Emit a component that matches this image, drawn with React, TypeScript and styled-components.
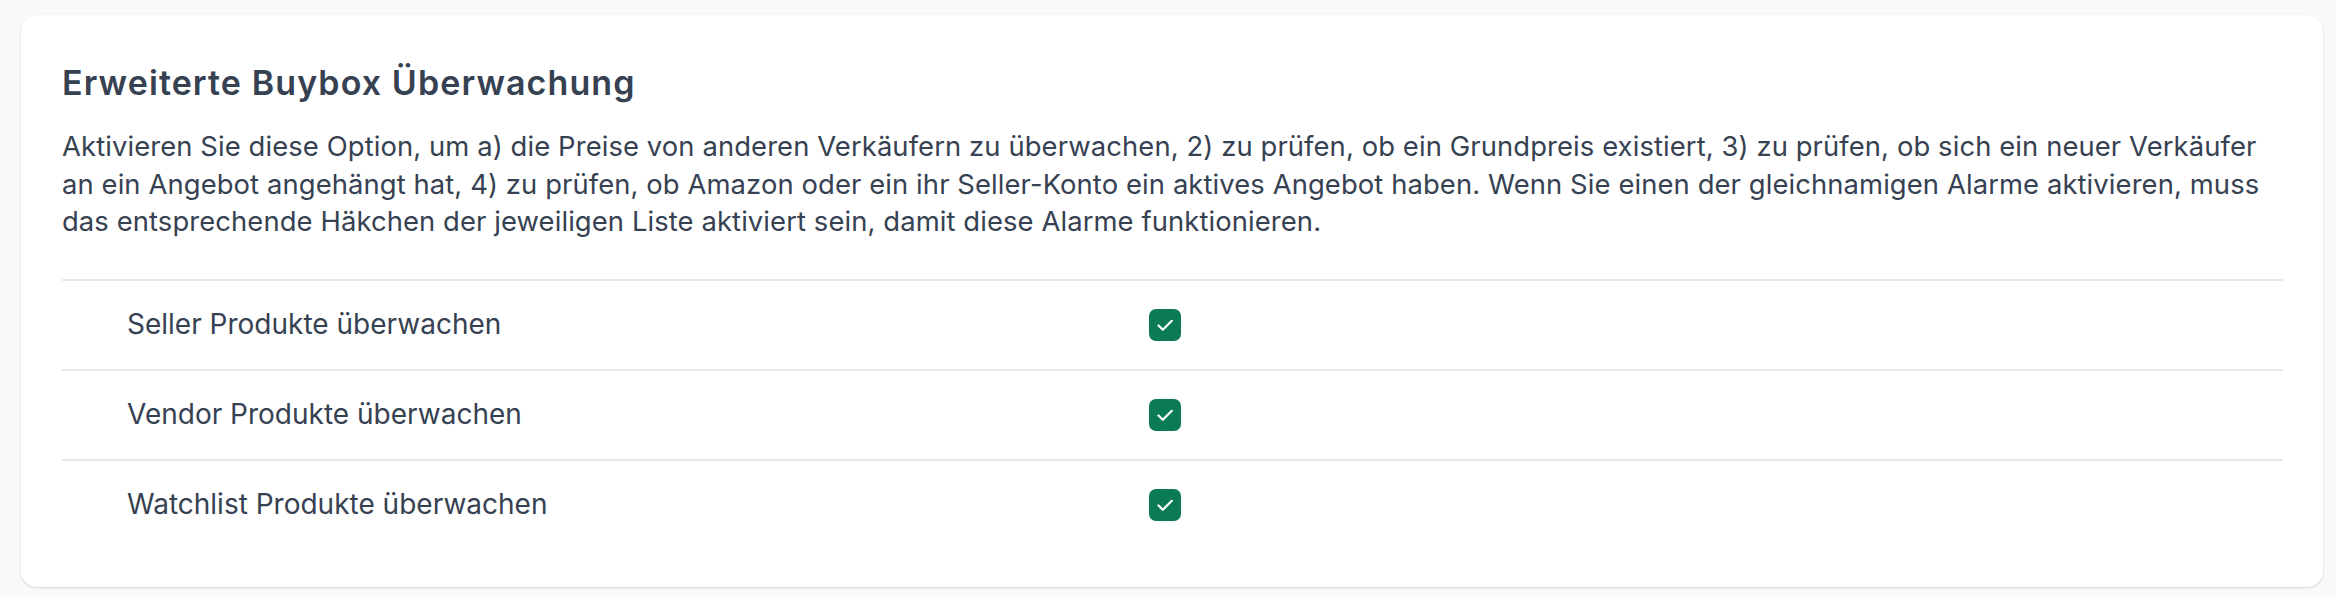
import React from "react";
import styled, { createGlobalStyle } from "styled-components";

const GlobalStyle = createGlobalStyle`
  html, body {
    margin: 0;
    padding: 0;
    background: #f8f9fb;
  }
  body {
    font-family: Inter, "Noto Sans", sans-serif;
    color: #364152;
  }
`;

const Page = styled.div`
  padding: 15px 13px 9px 21px;
`;

const Card = styled.section`
  background: #ffffff;
  border-radius: 16px;
  box-shadow: 0 1px 3px rgba(16, 24, 40, 0.1), 0 1px 2px rgba(16, 24, 40, 0.06);
  padding: 44px 40px 38px 41px;
`;

const Title = styled.h2`
  margin: 0;
  font-size: 34px;
  line-height: 48px;
  font-weight: 600;
  letter-spacing: 1.1px;
  color: #364152;
`;

const Description = styled.p`
  margin: 21px 0 38px;
  font-size: 27.4px;
  line-height: 37.5px;
  letter-spacing: 0.1px;
  font-weight: 400;
  color: #364152;
`;

const OptionList = styled.div`
  display: flex;
  flex-direction: column;
`;

const OptionRow = styled.label`
  display: grid;
  grid-template-columns: 1022px 32px 1fr;
  align-items: center;
  height: 88px;
  padding-left: 65px;
  border-top: 2px solid #e6e7ec;
  cursor: pointer;
`;

const OptionLabel = styled.span`
  font-size: 28px;
  line-height: 37.5px;
  color: #364152;
`;

const Box = styled.span<{ $checked: boolean }>`
  display: flex;
  align-items: center;
  justify-content: center;
  width: 32px;
  height: 32px;
  border-radius: 7px;
  box-sizing: border-box;
  background: ${(p) => (p.$checked ? "#0b7b56" : "#ffffff")};
  border: ${(p) => (p.$checked ? "none" : "2px solid #d0d5dd")};
`;

function CheckBox(props: { checked: boolean }) {
  return (
    <Box $checked={props.checked}>
      {props.checked && (
        <svg width="32" height="32" viewBox="0 0 32 32" fill="none">
          <path
            d="M9.5 16.5 L13.8 20.8 L22.8 11.8"
            stroke="#ffffff"
            strokeWidth="2.2"
            strokeLinecap="round"
            strokeLinejoin="round"
          />
        </svg>
      )}
    </Box>
  );
}

const options = [
  "Seller Produkte überwachen",
  "Vendor Produkte überwachen",
  "Watchlist Produkte überwachen",
];

export default function App() {
  return (
    <Page>
      <GlobalStyle />
      <Card>
        <Title>Erweiterte Buybox Überwachung</Title>
        <Description>
          Aktivieren Sie diese Option, um a) die Preise von anderen Verkäufern zu
          überwachen, 2) zu prüfen, ob ein Grundpreis existiert, 3) zu prüfen, ob
          sich ein neuer Verkäufer an ein Angebot angehängt hat, 4) zu prüfen, ob
          Amazon oder ein ihr Seller-Konto ein aktives Angebot haben. Wenn Sie
          einen der gleichnamigen Alarme aktivieren, muss das entsprechende
          Häkchen der jeweiligen Liste aktiviert sein, damit diese Alarme
          funktionieren.
        </Description>
        <OptionList>
          {options.map((o) => (
            <OptionRow key={o}>
              <OptionLabel>{o}</OptionLabel>
              <CheckBox checked />
            </OptionRow>
          ))}
        </OptionList>
      </Card>
    </Page>
  );
}
